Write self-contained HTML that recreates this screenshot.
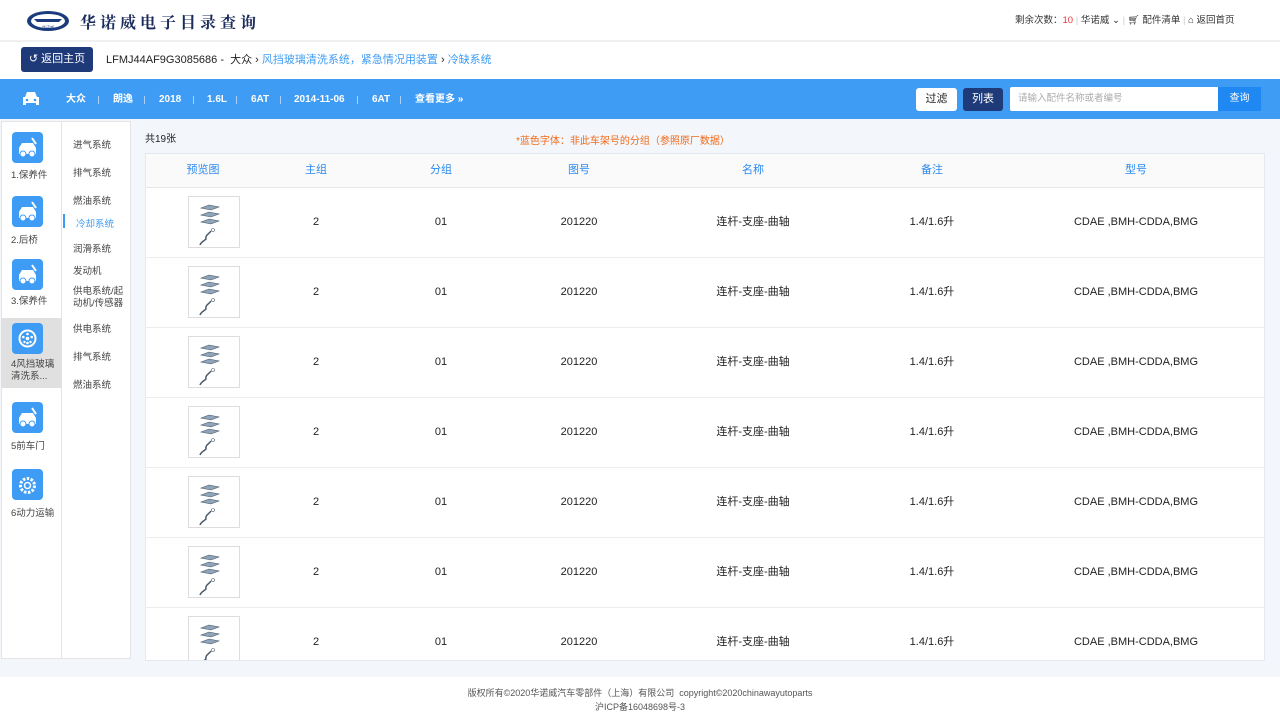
<!DOCTYPE html>
<html><head><meta charset="utf-8"><style>
*{margin:0;padding:0;box-sizing:border-box}
body{width:1280px;height:720px;overflow:hidden;background:#fff;font-family:"Liberation Sans","Noto Sans CJK SC",sans-serif;font-size:11px;color:#333;position:relative}
.abs{position:absolute}
.top{left:0;top:0;width:1280px;height:42px;background:#fff;border-bottom:2px solid #f0f0f0}
.crumb{left:0;top:43px;width:1280px;height:36px;background:#fff}
.bar{left:0;top:79px;width:1280px;height:40px;background:#3e9cf5}
.main{left:0;top:119px;width:1280px;height:558px;background:#f3f6fa}
.foot{left:0;top:677px;width:1280px;height:43px;background:#fff;text-align:center;font-size:9px;color:#555;line-height:14px;padding-top:9px}
.bi{color:#fff;font-size:10px;top:93px;line-height:14px;font-weight:bold}
.sep{top:96px;width:1px;height:8px;background:#a8d2fb}
.ic{left:12px;width:31px;height:31px;background:#3e9cf5;border-radius:4px}
.il{left:11px;font-size:9.5px;color:#444}
.sub{left:73px;font-size:9.5px;color:#444}
.card{left:145px;top:153px;width:1120px;height:508px;background:#fff;border:1px solid #e5e8ee;overflow:hidden}
table{border-collapse:collapse;width:1120px}
th{height:33px;background:#fafafa;color:#2b8af0;font-weight:normal;font-size:11px;border-bottom:1px solid #e8e8e8;line-height:14px}
td{height:70px;text-align:center;font-size:11px;color:#222;border-bottom:1px solid #ececec;line-height:14px}
.th{width:52px;height:52px;border:1px solid #ddd;margin:0 0 0 42px;background:#fff}
</style></head><body>
<div class="abs top"></div>
<svg class="abs" style="left:26px;top:10px" width="44" height="22"><ellipse cx="22" cy="11" rx="21" ry="10" fill="#1b3c7c"/><ellipse cx="22" cy="11" rx="17" ry="7" fill="#fff"/><path d="M8 9h28l-3 3H11z" fill="#1b3c7c"/><text x="22" y="19" font-size="4" fill="#1b3c7c" text-anchor="middle">华诺威</text></svg>
<div class="abs" style="left:80px;top:10px;font-size:16px;color:#1b2b5c;letter-spacing:4px;font-family:'Liberation Serif','Noto Serif CJK SC',serif;font-weight:bold">华诺威电子目录查询</div>
<div class="abs" style="left:1015px;top:14px;font-size:9.5px;color:#333;line-height:14px">剩余次数：<span style="color:#e33">10</span> <span style="color:#ccc">|</span> 华诺威 ⌄ <span style="color:#ccc">|</span> 🛒︎ 配件清单 <span style="color:#ccc">|</span> ⌂ 返回首页</div>
<div class="abs crumb"></div>
<div class="abs" style="left:21px;top:47px;width:72px;height:25px;background:#1f3a78;border-radius:3px;color:#fff;font-size:11px;line-height:25px;text-align:center">↺ 返回主页</div>
<div class="abs" style="left:106px;top:53px;font-size:11px;color:#222;line-height:14px">LFMJ44AF9G3085686 - &nbsp;大众 › <span style="color:#3e9cf5">风挡玻璃清洗系统，紧急情况用装置</span> › <span style="color:#3e9cf5">冷缺系统</span></div>
<div class="abs bar"></div>
<svg class="abs" style="left:21px;top:91px" width="20" height="16"><path d="M4 6l2-5h8l2 5h2v8h-3v-2H5v2H2V6z" fill="#fff"/><circle cx="6" cy="9" r="1.3" fill="#3e9cf5"/><circle cx="14" cy="9" r="1.3" fill="#3e9cf5"/></svg>
<div class="abs bi" style="left:66px">大众</div><div class="abs sep" style="left:98px"></div>
<div class="abs bi" style="left:113px">朗逸</div><div class="abs sep" style="left:144px"></div>
<div class="abs bi" style="left:159px">2018</div><div class="abs sep" style="left:193px"></div>
<div class="abs bi" style="left:207px">1.6L</div><div class="abs sep" style="left:236px"></div>
<div class="abs bi" style="left:251px">6AT</div><div class="abs sep" style="left:280px"></div>
<div class="abs bi" style="left:294px">2014-11-06</div><div class="abs sep" style="left:357px"></div>
<div class="abs bi" style="left:372px">6AT</div><div class="abs sep" style="left:400px"></div>
<div class="abs bi" style="left:415px">查看更多 »</div>
<div class="abs" style="left:916px;top:88px;width:41px;height:23px;background:#fff;border-radius:3px;font-size:11px;line-height:23px;text-align:center;color:#222">过滤</div>
<div class="abs" style="left:963px;top:88px;width:40px;height:23px;background:#1f3a78;border-radius:3px;font-size:11px;line-height:23px;text-align:center;color:#fff">列表</div>
<div class="abs" style="left:1010px;top:87px;width:208px;height:24px;background:#fff;border-radius:2px 0 0 2px;font-size:9.5px;line-height:24px;padding-left:8px;color:#aaa">请输入配件名称或者编号</div>
<div class="abs" style="left:1218px;top:87px;width:43px;height:24px;background:#2088f2;font-size:10px;line-height:24px;text-align:center;color:#fff">查询</div>
<div class="abs main"></div>
<div class="abs" style="left:1px;top:121px;width:61px;height:538px;background:#fff;border:1px solid #e4e4e4"></div>
<div class="abs" style="left:1px;top:318px;width:61px;height:70px;background:#e0e0e0"></div>
<div class="abs" style="left:62px;top:121px;width:69px;height:538px;background:#fff;border:1px solid #e4e4e4;border-left:none"></div>
<svg width="0" height="0" style="position:absolute"><defs>
<g id="car"><path d="M7 22v-6l3-5h11l3 5v6z" fill="#fff"/><circle cx="11" cy="22" r="3" fill="#fff" stroke="#3e9cf5"/><circle cx="20" cy="22" r="3" fill="#fff" stroke="#3e9cf5"/><path d="M20 6l4 6" stroke="#fff" stroke-width="2"/></g>
</defs></svg>
<div class="abs ic" style="top:132px"><svg width="31" height="31"><use href="#car"/></svg></div><div class="abs il" style="top:167px">1.保养件</div>
<div class="abs ic" style="top:196px"><svg width="31" height="31"><use href="#car"/></svg></div><div class="abs il" style="top:232px">2.后桥</div>
<div class="abs ic" style="top:259px"><svg width="31" height="31"><use href="#car"/></svg></div><div class="abs il" style="top:293px">3.保养件</div>
<div class="abs ic" style="top:323px"></div><div class="abs il" style="top:359px;line-height:12px">4风挡玻璃<br>清洗系...</div>
<div class="abs ic" style="top:402px"><svg width="31" height="31"><use href="#car"/></svg></div><div class="abs il" style="top:438px">5前车门</div>
<div class="abs ic" style="top:469px"></div><div class="abs il" style="top:505px">6动力运输</div>
<svg class="abs" style="left:17px;top:328px" width="21" height="21"><circle cx="10.5" cy="10.5" r="8" fill="none" stroke="#fff" stroke-width="2"/><circle cx="10.5" cy="10.5" r="1.8" fill="#fff"/><circle cx="10.5" cy="6" r="1.3" fill="#fff"/><circle cx="10.5" cy="15" r="1.3" fill="#fff"/><circle cx="6.3" cy="9" r="1.3" fill="#fff"/><circle cx="14.7" cy="9" r="1.3" fill="#fff"/><circle cx="7.5" cy="14" r="1.2" fill="#fff"/><circle cx="13.5" cy="14" r="1.2" fill="#fff"/></svg>
<svg class="abs" style="left:17px;top:475px" width="21" height="21"><circle cx="10.5" cy="10.5" r="7" fill="none" stroke="#fff" stroke-width="3" stroke-dasharray="2.5 1.5"/><circle cx="10.5" cy="10.5" r="3" fill="none" stroke="#fff" stroke-width="1.5"/></svg>
<div class="abs sub" style="top:137px">进气系统</div>
<div class="abs sub" style="top:165px">排气系统</div>
<div class="abs sub" style="top:193px">燃油系统</div>
<div class="abs" style="left:63px;top:214px;width:2px;height:14px;background:#3e9cf5"></div>
<div class="abs sub" style="left:76px;top:216px;color:#3e9cf5">冷却系统</div>
<div class="abs sub" style="top:241px">润滑系统</div>
<div class="abs sub" style="top:263px">发动机</div>
<div class="abs sub" style="top:286px;line-height:12px">供电系统/起<br>动机/传感器</div>
<div class="abs sub" style="top:321px">供电系统</div>
<div class="abs sub" style="top:349px">排气系统</div>
<div class="abs sub" style="top:377px">燃油系统</div>
<div class="abs" style="left:145px;top:130px;font-size:10px;color:#222">共19张</div>
<div class="abs" style="left:516px;top:132px;font-size:10px;color:#f06a1c">*蓝色字体：非此车架号的分组（参照原厂数据）</div>
<div class="abs card"><table>
<tr><th style="width:114px">预览图</th><th style="width:112px">主组</th><th style="width:138px">分组</th><th style="width:138px">图号</th><th style="width:210px">名称</th><th style="width:148px">备注</th><th>型号</th></tr>
<tr><td><div class="th"></div></td><td>2</td><td>01</td><td>201220</td><td>连杆-支座-曲轴</td><td>1.4/1.6升</td><td>CDAE ,BMH-CDDA,BMG</td></tr>
<tr><td><div class="th"></div></td><td>2</td><td>01</td><td>201220</td><td>连杆-支座-曲轴</td><td>1.4/1.6升</td><td>CDAE ,BMH-CDDA,BMG</td></tr>
<tr><td><div class="th"></div></td><td>2</td><td>01</td><td>201220</td><td>连杆-支座-曲轴</td><td>1.4/1.6升</td><td>CDAE ,BMH-CDDA,BMG</td></tr>
<tr><td><div class="th"></div></td><td>2</td><td>01</td><td>201220</td><td>连杆-支座-曲轴</td><td>1.4/1.6升</td><td>CDAE ,BMH-CDDA,BMG</td></tr>
<tr><td><div class="th"></div></td><td>2</td><td>01</td><td>201220</td><td>连杆-支座-曲轴</td><td>1.4/1.6升</td><td>CDAE ,BMH-CDDA,BMG</td></tr>
<tr><td><div class="th"></div></td><td>2</td><td>01</td><td>201220</td><td>连杆-支座-曲轴</td><td>1.4/1.6升</td><td>CDAE ,BMH-CDDA,BMG</td></tr>
<tr><td><div class="th"></div></td><td>2</td><td>01</td><td>201220</td><td>连杆-支座-曲轴</td><td>1.4/1.6升</td><td>CDAE ,BMH-CDDA,BMG</td></tr>
</table></div>
<svg width="0" height="0" style="position:absolute"><defs><g id="pt"><path d="M20 8l10 2-8 3-10-2z M20 15l10 2-8 3-10-2z M20 22l10 2-8 3-10-2z" fill="#8fa4b8" stroke="#4a5a6a" stroke-width=".6"/><path d="M22 34c-2 3-6 4-5 8-2 2-5 3-6 6" fill="none" stroke="#4a5a6a" stroke-width="1.5"/><circle cx="24" cy="33" r="1.5" fill="none" stroke="#4a5a6a" stroke-width=".6"/></g></defs></svg>
<script>
document.querySelectorAll('.th').forEach(function(d){d.innerHTML='<svg width="50" height="50"><use href="#pt"/></svg>';});
</script>
<div class="abs foot">版权所有©2020华诺威汽车零部件（上海）有限公司 &nbsp;copyright©2020chinawayutoparts<br>沪ICP备16048698号-3</div>
</body></html>
